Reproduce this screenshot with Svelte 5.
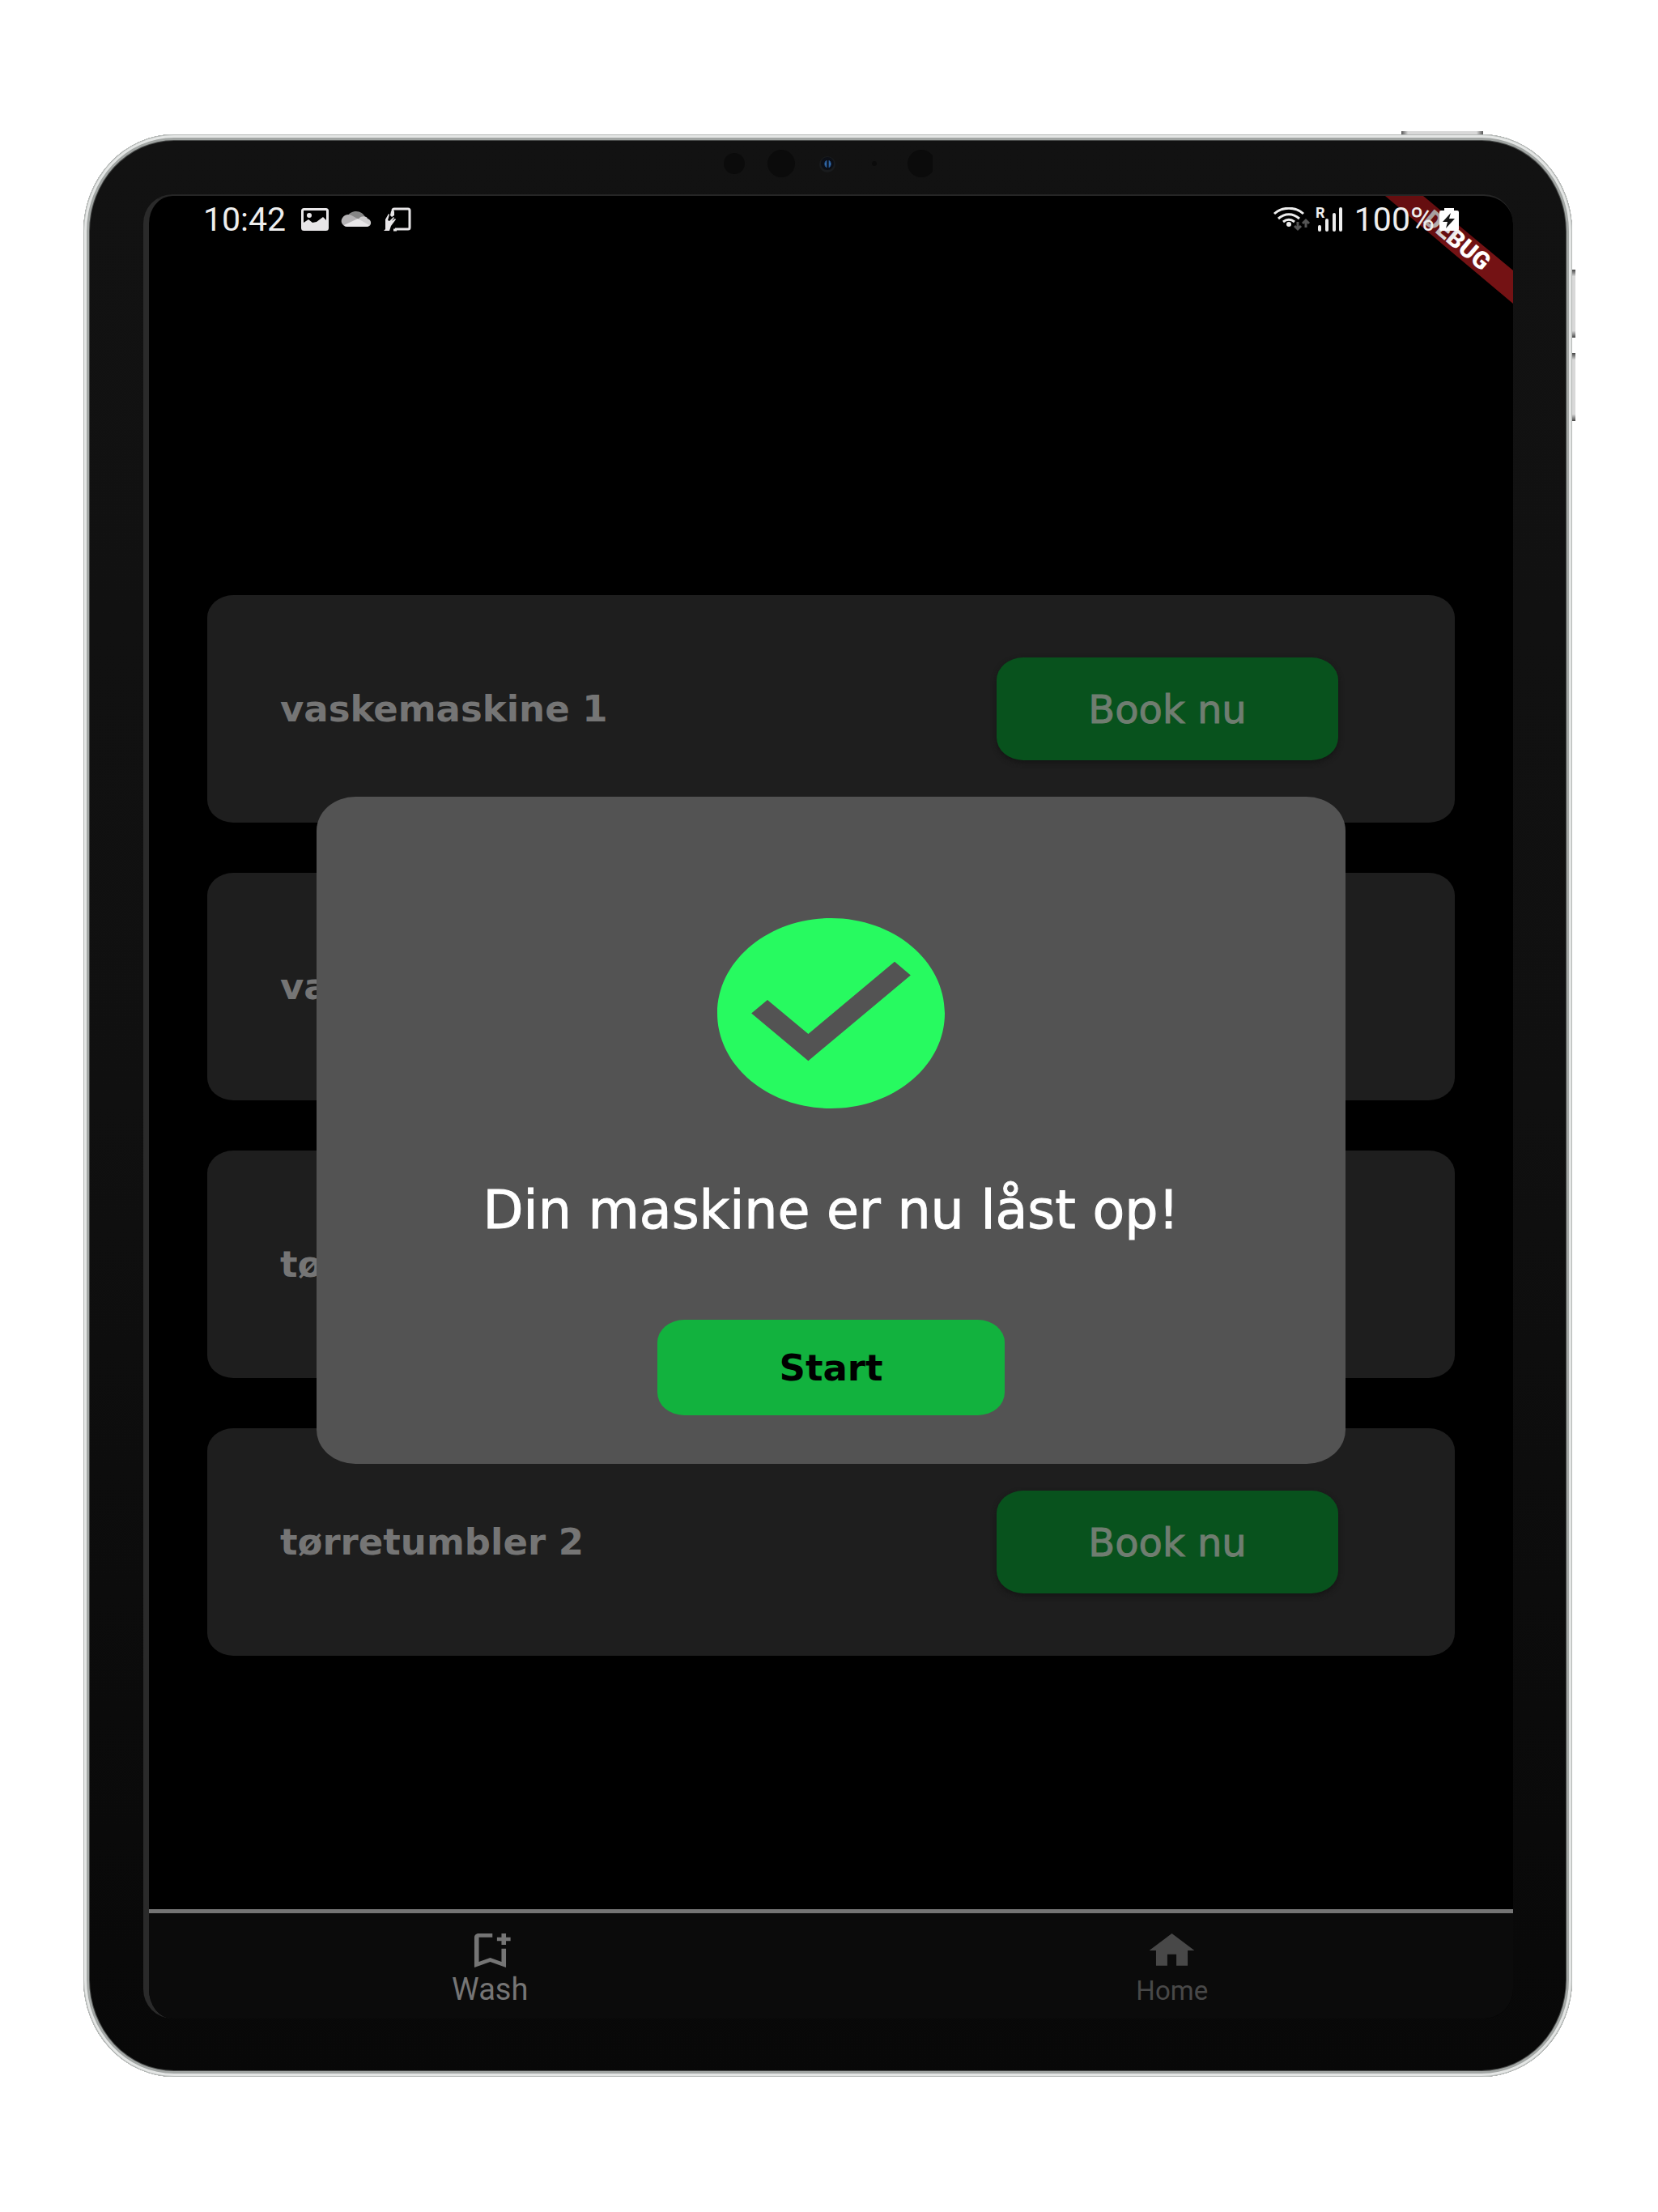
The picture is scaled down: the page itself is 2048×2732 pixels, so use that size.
<script>
  const machines = ['vaskemaskine 1', 'vaskemaskine 2', 'tørretumbler 1', 'tørretumbler 2'];
</script>

<div class="page">
  <div class="device">
    <span class="key power"></span>
    <span class="key volume-up"></span>
    <span class="key volume-down"></span>

    <svg class="sensors" viewBox="0 0 260 40" aria-hidden="true">
      <circle cx="15" cy="20" r="13" fill="#0b0b0b" />
      <circle cx="73" cy="20" r="17" fill="#0b0b0b" />
      <circle cx="130" cy="21" r="10" fill="#191b1d" />
      <circle cx="130" cy="20" r="8" fill="#0c0f16" />
      <path d="M129 16 a4 5 0 0 0 0 9z" fill="#3f7cc0" stroke="#1f4a80" />
      <path d="M132 16 a4 5 0 0 1 0 9z" fill="#3f7cc0" stroke="#1f4a80" />
      <circle cx="188" cy="20" r="3" fill="#0b0b0b" />
      <circle cx="246" cy="20" r="17" fill="#0b0b0b" />
    </svg>

    <div class="screen">
      <svg class="ribbon" viewBox="0 0 158 133" aria-label="DEBUG">
        <defs>
          <linearGradient id="band" x1="0" y1="0" x2="0" y2="1">
            <stop offset="0.38" stop-color="#660e10" />
            <stop offset="0.45" stop-color="#741214" />
          </linearGradient>
          <linearGradient id="label" x1="0" y1="0" x2="1" y2="0">
            <stop offset="0.1" stop-color="#a8a0a0" />
            <stop offset="0.5" stop-color="#ffffff" />
          </linearGradient>
        </defs>
        <path d="M0 0h47l111 92v41z" fill="url(#band)" />
        <text x="89" y="65" transform="rotate(40 89 55)" text-anchor="middle" fill="url(#label)">DEBUG</text>
      </svg>

      <header class="status">
        <div class="group">
          <span class="clock time">10:42</span>
          <svg width="34" height="28" viewBox="0 0 34 28" aria-hidden="true">
            <rect x="1.500" y="1.500" width="31" height="25" rx="2" fill="none" stroke="#e8e6e8" stroke-width="3" />
            <circle cx="10" cy="9" r="3" fill="#e8e6e8" />
            <path d="M3 25v-7l6-4 5 4 5-1 8-6 4 4v10z" fill="#e8e6e8" />
          </svg>
          <svg width="38" height="28" viewBox="0 0 38 28" aria-hidden="true">
            <path d="M8 11C10 6 14 4 19 4s9 3 11 7l-10 4z" fill="#858585" />
            <path d="M8 23a7 7 0 0 1-6-11c3-5 9-5 13-2l9 5-7 8z" fill="#b4b2b4" />
            <path d="M22 13c4-4 10-3 11 0 5 1 6 9 0 10h-8z" fill="#cfcdcf" />
            <path d="M4 21l17-8 14 8c-1 1-2 2-4 2H8c-2 0-3-1-4-2z" fill="#e8e6e8" />
          </svg>
          <svg width="34" height="30" viewBox="0 0 34 30" aria-hidden="true">
            <path d="M11 9V4q0-2 2-2h17q2 0 2 2v21q0 2-2 2H14" fill="none" stroke="#e8e6e8" stroke-width="3" />
            <path d="M12 28h4" stroke="#e8e6e8" stroke-width="3" />
            <path d="M0 29l2-2V15l4-7 1 1-2 7 2 1 5-5 1 1-3 4 4-3 1 1-6 8-2 6z" fill="#e8e6e8" />
            <path d="M9 5h4v5l-3 2-2-2z" fill="#e8e6e8" />
          </svg>
        </div>
        <div class="group right">
          <svg width="46" height="30" viewBox="0 0 46 30" aria-hidden="true">
            <g fill="none" stroke="#eeeeee" stroke-width="3">
              <path d="M1 8C11-1 27-1 37 8" />
              <path d="M6 14c8-7 18-7 26 0" />
              <path d="M12 18c5-4 9-4 14 0" />
            </g>
            <circle cx="19" cy="21" r="3" fill="#eeeeee" />
            <path d="M30 18v8m-4-3l4 4 4-4M40 25v-9m-4 4l4-4 4 4" fill="none" stroke="#555555" stroke-width="3" />
          </svg>
          <svg width="34" height="40" viewBox="0 -5 34 40" aria-hidden="true">
            <text class="roaming" x="0" y="13">R</text>
            <path d="M5 24v4M14 16v12M23 9v19M31 2v26" stroke="#eeeeee" stroke-width="4" stroke-linecap="round" />
          </svg>
          <span class="clock percent">100%</span>
          <svg width="24" height="30" viewBox="0 0 24 30" aria-hidden="true">
            <path d="M6 1h12v3h4q2 0 2 2v21q0 2-2 2H2q-2 0-2-2V6q0-2 2-2h4z" fill="#ffffff" />
            <path d="M14 7L4 18h6l-2 8 11-12h-7z" fill="#151515" />
          </svg>
        </div>
      </header>

      <main>
        {#each machines as name}
          <article>
            <h2>{name}</h2>
            <button class="book">Book nu</button>
          </article>
        {/each}
      </main>

      <nav>
        <a href="#wash">
          <svg viewBox="0 0 24 24" preserveAspectRatio="none" aria-hidden="true">
            <path d="M17 11v6.970l-5-2.140-5 2.140V5h6V3H7c-1.100 0-2 .9-2 2v16l7-3 7 3V11h-2zm4-4h-2v2h-2V7h-2V5h2V3h2v2h2v2z" />
          </svg>
          Wash
        </a>
        <a href="#home" class="idle">
          <svg viewBox="0 0 24 24" preserveAspectRatio="none" aria-hidden="true">
            <path d="M10 20v-6h4v6h5v-8h3L12 3 2 12h3v8z" />
          </svg>
          Home
        </a>
      </nav>

      <div class="overlay">
        <div class="dialog" role="dialog" aria-modal="true" aria-labelledby="message">
          <svg class="check" viewBox="2 2 20 20" preserveAspectRatio="none" aria-hidden="true">
            <path d="M12 2C6.480 2 2 6.480 2 12s4.480 10 10 10 10-4.480 10-10S17.520 2 12 2zm-2 15l-5-5 1.410-1.410L10 14.170l7.590-7.590L19 8l-9 9z" />
          </svg>
          <p id="message">Din maskine er nu låst op!</p>
          <button class="start">Start</button>
        </div>
      </div>
    </div>
  </div>
</div>

<style>
  :global(body) {
    margin: 0;
    background: #ffffff;
  }

  .page {
    box-sizing: border-box;
    min-height: 100vh;
    padding: 166px 106px 167px 103px;
    display: flex;
    font-family: "DejaVu Sans", sans-serif;
  }

  .device {
    position: relative;
    flex: 1;
    display: flex;
    padding: 74px 73px 72px 74px;
    border-radius: 112px / 120px;
    background: linear-gradient(#121212, #101010 50%, #080808);
    box-shadow:
      inset 0 0 0 1px #b4b8b6,
      inset 0 0 0 4px #e4e6e5,
      inset 0 0 0 7px #a2a6a4,
      inset 0 0 0 8px #484a49;
  }

  .key {
    position: absolute;
    background: linear-gradient(90deg, #555555, #d8d8d8 8%, #d8d8d8 92%, #555555);
  }

  .power {
    top: -4px;
    right: 110px;
    width: 101px;
    height: 4px;
  }

  .volume-up,
  .volume-down {
    right: -4px;
    width: 4px;
    height: 84px;
    background: linear-gradient(#444444, #d8d8d8 10%, #d8d8d8 90%, #444444);
  }

  .volume-up {
    top: 167px;
  }

  .volume-down {
    top: 270px;
  }

  .sensors {
    position: absolute;
    top: 16px;
    left: 50%;
    width: 260px;
    height: 40px;
    margin-left: -131px;
  }

  .screen {
    position: relative;
    flex: 1;
    display: flex;
    flex-direction: column;
    overflow: hidden;
    border-left: 7px solid #2a2a2a;
    border-top: 2px solid #262626;
    border-radius: 36px;
    background: #000000;
  }

  .ribbon {
    position: absolute;
    top: 0;
    right: 0;
    width: 158px;
    height: 133px;
  }

  .ribbon text {
    font: 900 30px Roboto, sans-serif;
  }

  .status {
    position: relative;
    display: flex;
    justify-content: space-between;
    align-items: center;
    height: 58px;
    padding: 0 67px 0 67px;
    color: #eeeeee;
  }

  .group {
    display: flex;
    align-items: center;
    gap: 15px;
  }

  .group.right {
    gap: 6px;
  }

  .clock {
    font: 400 41px/56px Roboto, sans-serif;
  }

  .time {
    padding-right: 4px;
  }

  .percent {
    padding-left: 8px;
  }

  .roaming {
    font: 700 18px Roboto, sans-serif;
    fill: #eeeeee;
  }

  main {
    flex: 1;
    display: flex;
    flex-direction: column;
    gap: 62px;
    padding: 435px 72px 0;
  }

  article {
    display: flex;
    justify-content: space-between;
    align-items: center;
    height: 281px;
    box-sizing: border-box;
    padding: 0 144px 0 90px;
    border-radius: 32px / 28px;
    background: #1e1e1e;
  }

  h2 {
    margin: 0;
    font-size: 45px;
    font-weight: 700;
    color: #757575;
  }

  button {
    border: 0;
    border-radius: 33px / 28px;
    font-family: inherit;
  }

  .book {
    width: 422px;
    height: 127px;
    background: #08521d;
    box-shadow: 0 3px 6px #151515;
    color: #6f7d70;
    font-size: 48px;
    -webkit-text-stroke: 1px currentColor;
  }

  nav {
    display: flex;
    height: 130px;
    border-top: 5px solid #757575;
    background: #0b0b0b;
  }

  nav a {
    flex: 1;
    display: flex;
    flex-direction: column;
    align-items: center;
    padding-top: 18px;
    font: 400 38px/40px Roboto, sans-serif;
    color: #757575;
    text-decoration: none;
  }

  nav a.idle {
    font-size: 33px;
    line-height: 43px;
    color: #484848;
  }

  nav svg {
    width: 67px;
    height: 56px;
    fill: currentColor;
  }

  .overlay {
    position: absolute;
    inset: 57px 0 0;
    display: flex;
    align-items: center;
    padding: 0 207px;
  }

  .dialog {
    flex: 1;
    display: flex;
    flex-direction: column;
    align-items: center;
    padding: 150px 0 60px;
    border-radius: 48px / 42px;
    background: #535353;
  }

  .check {
    width: 281px;
    height: 235px;
    fill: #27fa60;
  }

  p {
    margin: 86px 0 95px;
    font-size: 65px;
    line-height: 80px;
    color: #ffffff;
    -webkit-text-stroke: 1px currentColor;
  }

  .start {
    width: 429px;
    height: 118px;
    background: #12b23e;
    color: #000000;
    font-size: 45px;
    font-weight: 700;
  }
</style>
